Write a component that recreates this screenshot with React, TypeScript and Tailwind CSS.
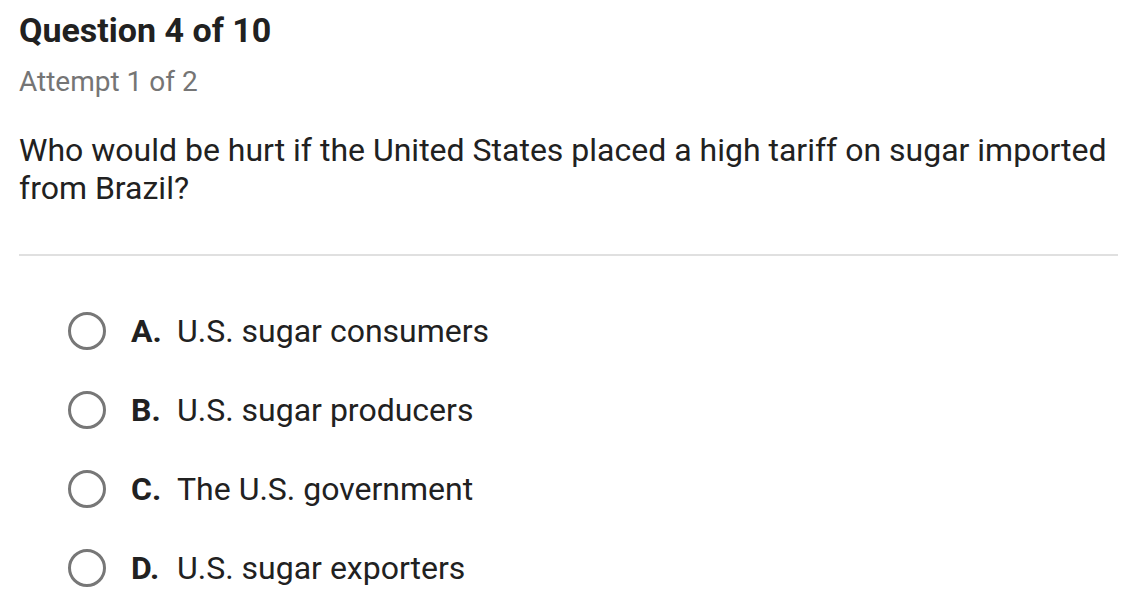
const options = [
  { letter: "A.", text: "U.S. sugar consumers" },
  { letter: "B.", text: "U.S. sugar producers" },
  { letter: "C.", text: "The U.S. government" },
  { letter: "D.", text: "U.S. sugar exporters" },
];

const Radio = () => (
  <span className="inline-block w-[38px] h-[38px] rounded-full border-[3px] border-[#777777] shrink-0" />
);

export default function App() {
  return (
    <div
      className="w-[1128px] h-[616px] bg-white text-[#212121] overflow-hidden"
      style={{ fontFamily: "Roboto, 'Liberation Sans', sans-serif" }}
    >
      <div className="pl-[19px] pr-[10px] pt-[10px]">
        <h1 className="text-[34px] font-bold leading-[40px]">Question 4 of 10</h1>
        <div className="mt-[16px] text-[28px] leading-[32px] text-[#757575]">Attempt 1 of 2</div>
        <p className="mt-[33px] text-[32px] leading-[38px]">
          Who would be hurt if the United States placed a high tariff on sugar imported from Brazil?
        </p>
        <div className="mt-[47px] h-[2px] bg-[#e0e0e0]" />
        <div className="mt-[56px] pl-[49px] flex flex-col gap-[41px]">
          {options.map((o) => (
            <div key={o.letter} className="flex items-center h-[38px]">
              <Radio />
              <span className="ml-[25px] text-[32px] font-bold w-[46px]">{o.letter}</span>
              <span className="text-[32px]">{o.text}</span>
            </div>
          ))}
        </div>
      </div>
    </div>
  );
}
